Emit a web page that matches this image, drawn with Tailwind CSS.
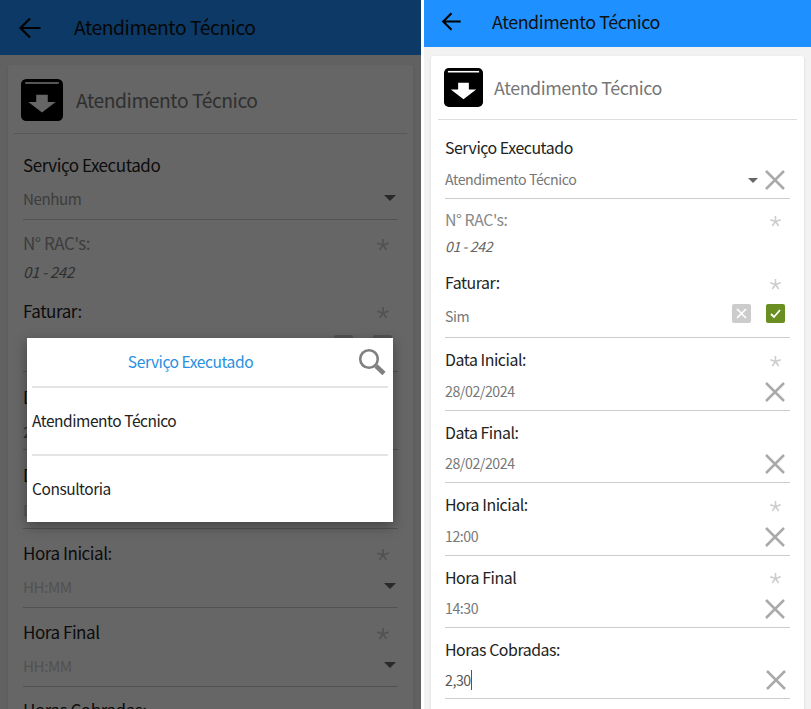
<!DOCTYPE html>
<html lang="pt-BR">
<head>
  <meta charset="UTF-8">
  <title>Atendimento Técnico</title>
  <script src="https://cdn.jsdelivr.net/npm/@tailwindcss/browser@4"></script>
</head>
<body class="bg-white font-['Noto_Sans_CJK_JP','Noto_Sans',sans-serif] overflow-hidden">
  <div class="flex h-[709px] w-[811px] overflow-hidden tracking-[-0.45px]">

    <!-- Left phone: dropdown open -->
    <div class="relative h-full w-[421px] shrink-0 overflow-hidden bg-[#f2f2f2]">
      <div class="flex h-[55px] items-center bg-[#1e90ff]">
        <svg class="ml-[18px] h-[24px] w-[24px]" viewBox="0 0 24 24" fill="none" stroke="#000" stroke-width="2.2"><path d="M22.5 12H2.5M12 2.5 2.5 12l9.5 9.5"/></svg>
        <span class="ml-[32px] text-[19.3px] text-[#111]">Atendimento Técnico</span>
      </div>
      <div class="mx-[8px] mt-[10px] rounded-[3px] bg-white px-[6px] pb-4 shadow-sm">
        <div class="flex h-[69px] items-center border-b border-[#ddd] pl-[7px] pt-[2px]">
          <svg class="h-[42px] w-[42px]" viewBox="0 0 40 40"><rect width="40" height="40" rx="5"/><rect x="4" y="3" width="32" height="1.6" fill="#fff"/><path d="M14.5 15h11v7H33L20 32 7 22h7.500z" fill="#fff"/></svg>
          <span class="ml-[13px] text-[19.3px] text-[#777]">Atendimento Técnico</span>
        </div>
        <div class="mx-[9px]">
          <div class="h-[86px] border-b border-[#ccc] pt-[19px]">
            <div class="h-[24px] text-[17px] leading-[24px] text-[#222]">Serviço Executado</div>
            <div class="mt-[9px] flex h-[24px] items-center justify-between text-[15.2px] text-[#999]">Nenhum<span class="mr-[2px] h-0 w-0 border-x-[6px] border-t-[6px] border-x-transparent border-t-[#666]"></span></div>
          </div>
          <div class="h-[69px] pt-[11px]">
            <div class="flex h-[24px] items-center justify-between pr-[9px] text-[17px] text-[#999]">N° RAC's:<svg class="mt-[3px] h-[12px] w-[12px]" viewBox="0 0 12 12" stroke="#ccc" stroke-width="1.700"><path d="M6 6V0M6 6l5.700-1.900M6 6l3.500 4.900M6 6l-3.500 4.900M6 6 .3 4.100"/></svg></div>
            <div class="mt-[4px] h-[24px] text-[15.2px] leading-[24px] italic text-[#777]">01 - 242</div>
          </div>
          <div class="h-[83px] border-b border-[#ccc] pt-[10px]">
            <div class="flex h-[24px] items-center justify-between pr-[9px] text-[17px] text-[#222]">Faturar:<svg class="mt-[3px] h-[12px] w-[12px]" viewBox="0 0 12 12" stroke="#ccc" stroke-width="1.700"><path d="M6 6V0M6 6l5.700-1.900M6 6l3.500 4.900M6 6l-3.500 4.900M6 6 .3 4.100"/></svg></div>
            <div class="mt-[12px] flex justify-end gap-[20px] pr-[6px]">
              <span class="h-[20px] w-[19px] rounded-[2px] bg-[#ccc]"></span>
              <span class="h-[20px] w-[19px] rounded-[2px] bg-[#ccc]"></span>
            </div>
          </div>
          <div class="h-[78px] border-b border-[#ccc] pt-[13px]">
            <div class="h-[24px] text-[17px] leading-[24px] text-[#222]">Data Inicial:</div>
            <div class="mt-[10px] text-[15.2px] leading-[24px] text-[#777]">28/02/2024</div>
          </div>
          <div class="h-[79px] border-b border-[#ccc] pt-[13px]">
            <div class="h-[24px] text-[17px] leading-[24px] text-[#222]">Data Final:</div>
            <div class="mt-[10px] text-[15.2px] leading-[24px] text-[#ccc]">DD/MM/AAAA</div>
          </div>
          <div class="h-[79px] border-b border-[#ccc] pt-[12px]">
            <div class="flex h-[24px] items-center justify-between pr-[9px] text-[17px] text-[#222]">Hora Inicial:<svg class="mt-[3px] h-[12px] w-[12px]" viewBox="0 0 12 12" stroke="#ccc" stroke-width="1.700"><path d="M6 6V0M6 6l5.700-1.900M6 6l3.500 4.900M6 6l-3.500 4.900M6 6 .3 4.100"/></svg></div>
            <div class="mt-[9px] flex h-[24px] items-center justify-between text-[15.2px] text-[#ccc]">HH:MM<span class="mr-[2px] h-0 w-0 border-x-[6px] border-t-[6px] border-x-transparent border-t-[#666]"></span></div>
          </div>
          <div class="h-[79px] border-b border-[#ccc] pt-[12px]">
            <div class="flex h-[24px] items-center justify-between pr-[9px] text-[17px] text-[#222]">Hora Final<svg class="mt-[3px] h-[12px] w-[12px]" viewBox="0 0 12 12" stroke="#ccc" stroke-width="1.700"><path d="M6 6V0M6 6l5.700-1.900M6 6l3.500 4.900M6 6l-3.500 4.900M6 6 .3 4.100"/></svg></div>
            <div class="mt-[9px] flex h-[24px] items-center justify-between text-[15.2px] text-[#ccc]">HH:MM<span class="mr-[2px] h-0 w-0 border-x-[6px] border-t-[6px] border-x-transparent border-t-[#666]"></span></div>
          </div>
          <div class="pt-[11px] text-[17px] leading-[24px] text-[#222]">Horas Cobradas:</div>
        </div>
      </div>

      <!-- Overlay + modal -->
      <div class="absolute inset-0 bg-black/60"></div>
      <div class="absolute left-[27px] top-[338px] h-[184px] w-[366px] bg-white px-[5px] shadow-[0_4px_12px_rgba(0,0,0,0.35)]">
        <div class="relative flex h-[50px] items-center justify-center border-b-2 border-[#e4e4e4] pr-[39px]">
          <span class="text-[15.6px] text-[#2a8fe0]">Serviço Executado</span>
          <svg class="absolute right-[2px] top-[10px] h-[28px] w-[28px]" viewBox="0 0 28 28" fill="none" stroke="#808080"><circle cx="11" cy="11" r="8.800" stroke-width="2.600"/><path d="M18 18l8 7.500" stroke-width="4.500"/></svg>
        </div>
        <div class="flex h-[68px] items-center border-b-2 border-[#e4e4e4] text-[15.5px] text-[#222]">Atendimento Técnico</div>
        <div class="flex h-[66px] items-center text-[15.5px] text-[#222]">Consultoria</div>
      </div>
    </div>

    <!-- Right phone: filled form -->
    <div class="h-full w-[3px] shrink-0 bg-white"></div>
    <div class="h-full flex-1 overflow-hidden bg-[#f2f2f2]">
      <div class="flex h-[47px] items-center bg-[#1e90ff] pb-[5px]">
        <svg class="ml-[17px] h-[21px] w-[21px]" viewBox="0 0 24 24" fill="none" stroke="#000" stroke-width="2.4"><path d="M22.5 12H2.5M12 2.5 2.5 12l9.500 9.500"/></svg>
        <span class="ml-[30px] text-[17.9px] text-[#111]">Atendimento Técnico</span>
      </div>
      <div class="mx-[7px] mt-[9px] rounded-[3px] bg-white px-[7px] shadow-sm">
        <div class="flex h-[64px] items-center border-b border-[#ddd] pl-[6px]">
          <svg class="h-[39px] w-[39px]" viewBox="0 0 40 40"><rect width="40" height="40" rx="5"/><rect x="4" y="3" width="32" height="1.6" fill="#fff"/><path d="M14.500 15h11v7H33L20 32 7 22h7.500z" fill="#fff"/></svg>
          <span class="ml-[11px] text-[17.9px] text-[#777]">Atendimento Técnico</span>
        </div>
        <div class="mx-[7px]">
          <div class="h-[79px] border-b border-[#ccc] pt-[16px]">
            <div class="h-[24px] text-[15.9px] leading-[24px] text-[#222]">Serviço Executado</div>
            <div class="mt-[8px] flex h-[24px] items-center text-[14.2px] text-[#777]">
              <span class="flex-1">Atendimento Técnico</span>
              <span class="mr-[7px] h-0 w-0 border-x-[5px] border-t-[5px] border-x-transparent border-t-[#666]"></span>
              <svg class="mr-[5px] h-[20px] w-[20px]" viewBox="0 0 20 20" stroke="#aaa" stroke-width="2.500"><path d="M1 1l18 18M19 1 1 19"/></svg>
            </div>
          </div>
          <div class="h-[60px] pt-[9px]">
            <div class="flex h-[24px] items-center justify-between pr-[9px] text-[15.9px] text-[#888]">N° RAC's:<svg class="mt-[2px] h-[11px] w-[11px]" viewBox="0 0 12 12" stroke="#ccc" stroke-width="1.700"><path d="M6 6V0M6 6l5.700-1.900M6 6l3.500 4.900M6 6l-3.500 4.900M6 6 .3 4.100"/></svg></div>
            <div class="mt-[2px] h-[24px] text-[14.2px] leading-[24px] italic text-[#666]">01 - 242</div>
          </div>
          <div class="h-[79px] border-b border-[#ccc] pt-[12px]">
            <div class="flex h-[24px] items-center justify-between pr-[9px] text-[15.9px] text-[#222]">Faturar:<svg class="mt-[2px] h-[11px] w-[11px]" viewBox="0 0 12 12" stroke="#ccc" stroke-width="1.700"><path d="M6 6V0M6 6l5.700-1.900M6 6l3.500 4.900M6 6l-3.500 4.900M6 6 .3 4.100"/></svg></div>
            <div class="mt-[10px] flex h-[24px] items-center text-[14.2px] text-[#777]">
              <span class="flex-1">Sim</span>
              <span class="mb-[7px] flex h-[19px] w-[19px] items-center justify-center rounded-[2px] bg-[#ccc]"><svg class="h-[11px] w-[11px]" viewBox="0 0 11 11" stroke="#fff" stroke-width="1.600"><path d="M1 1l9 9M10 1l-9 9"/></svg></span>
              <span class="mb-[7px] ml-[15px] mr-[5px] flex h-[19px] w-[19px] items-center justify-center rounded-[2px] bg-[#6b8e23]"><svg class="h-[11px] w-[11px]" viewBox="0 0 11 11" fill="none" stroke="#fff" stroke-width="1.800"><path d="M1 6l3 3 6-7"/></svg></span>
            </div>
          </div>
          <div class="h-[72.5px] border-b border-[#ccc] pt-[10px]">
            <div class="flex h-[24px] items-center justify-between pr-[9px] text-[15.9px] text-[#222]">Data Inicial:<svg class="mt-[2px] h-[11px] w-[11px]" viewBox="0 0 12 12" stroke="#ccc" stroke-width="1.700"><path d="M6 6V0M6 6l5.700-1.900M6 6l3.500 4.900M6 6l-3.500 4.900M6 6 .3 4.100"/></svg></div>
            <div class="mt-[1px] flex h-[37px] items-center justify-between pr-[5px] text-[14.2px] text-[#777]">28/02/2024<svg class="h-[20px] w-[20px]" viewBox="0 0 20 20" stroke="#aaa" stroke-width="2.500"><path d="M1 1l18 18M19 1 1 19"/></svg></div>
          </div>
          <div class="h-[72.5px] border-b border-[#ccc] pt-[10px]">
            <div class="h-[24px] text-[15.9px] leading-[24px] text-[#222]">Data Final:</div>
            <div class="mt-[1px] flex h-[37px] items-center justify-between pr-[5px] text-[14.2px] text-[#777]">28/02/2024<svg class="h-[20px] w-[20px]" viewBox="0 0 20 20" stroke="#aaa" stroke-width="2.500"><path d="M1 1l18 18M19 1 1 19"/></svg></div>
          </div>
          <div class="h-[72.5px] border-b border-[#ccc] pt-[10px]">
            <div class="flex h-[24px] items-center justify-between pr-[9px] text-[15.9px] text-[#222]">Hora Inicial:<svg class="mt-[2px] h-[11px] w-[11px]" viewBox="0 0 12 12" stroke="#ccc" stroke-width="1.700"><path d="M6 6V0M6 6l5.700-1.900M6 6l3.500 4.900M6 6l-3.500 4.900M6 6 .3 4.100"/></svg></div>
            <div class="mt-[1px] flex h-[37px] items-center justify-between pr-[5px] text-[14.2px] text-[#777]">12:00<svg class="h-[20px] w-[20px]" viewBox="0 0 20 20" stroke="#aaa" stroke-width="2.500"><path d="M1 1l18 18M19 1 1 19"/></svg></div>
          </div>
          <div class="h-[72.5px] border-b border-[#ccc] pt-[10px]">
            <div class="flex h-[24px] items-center justify-between pr-[9px] text-[15.9px] text-[#222]">Hora Final<svg class="mt-[2px] h-[11px] w-[11px]" viewBox="0 0 12 12" stroke="#ccc" stroke-width="1.700"><path d="M6 6V0M6 6l5.700-1.900M6 6l3.500 4.900M6 6l-3.500 4.900M6 6 .3 4.100"/></svg></div>
            <div class="mt-[1px] flex h-[37px] items-center justify-between pr-[5px] text-[14.2px] text-[#777]">14:30<svg class="h-[20px] w-[20px]" viewBox="0 0 20 20" stroke="#aaa" stroke-width="2.500"><path d="M1 1l18 18M19 1 1 19"/></svg></div>
          </div>
          <div class="h-[71px] border-b border-[#ccc] pt-[10px]">
            <div class="h-[24px] text-[15.9px] leading-[24px] text-[#222]">Horas Cobradas:</div>
            <div class="mt-[1px] flex h-[34px] items-center justify-between pr-[4px] text-[14.2px] text-[#555]"><span class="border-r border-[#555] leading-[20px]">2,30</span><svg class="h-[20px] w-[20px]" viewBox="0 0 20 20" stroke="#aaa" stroke-width="2.500"><path d="M1 1l18 18M19 1 1 19"/></svg></div>
          </div>
          <div class="h-[20px]"></div>
        </div>
      </div>
    </div>
  </div>
</body>
</html>
